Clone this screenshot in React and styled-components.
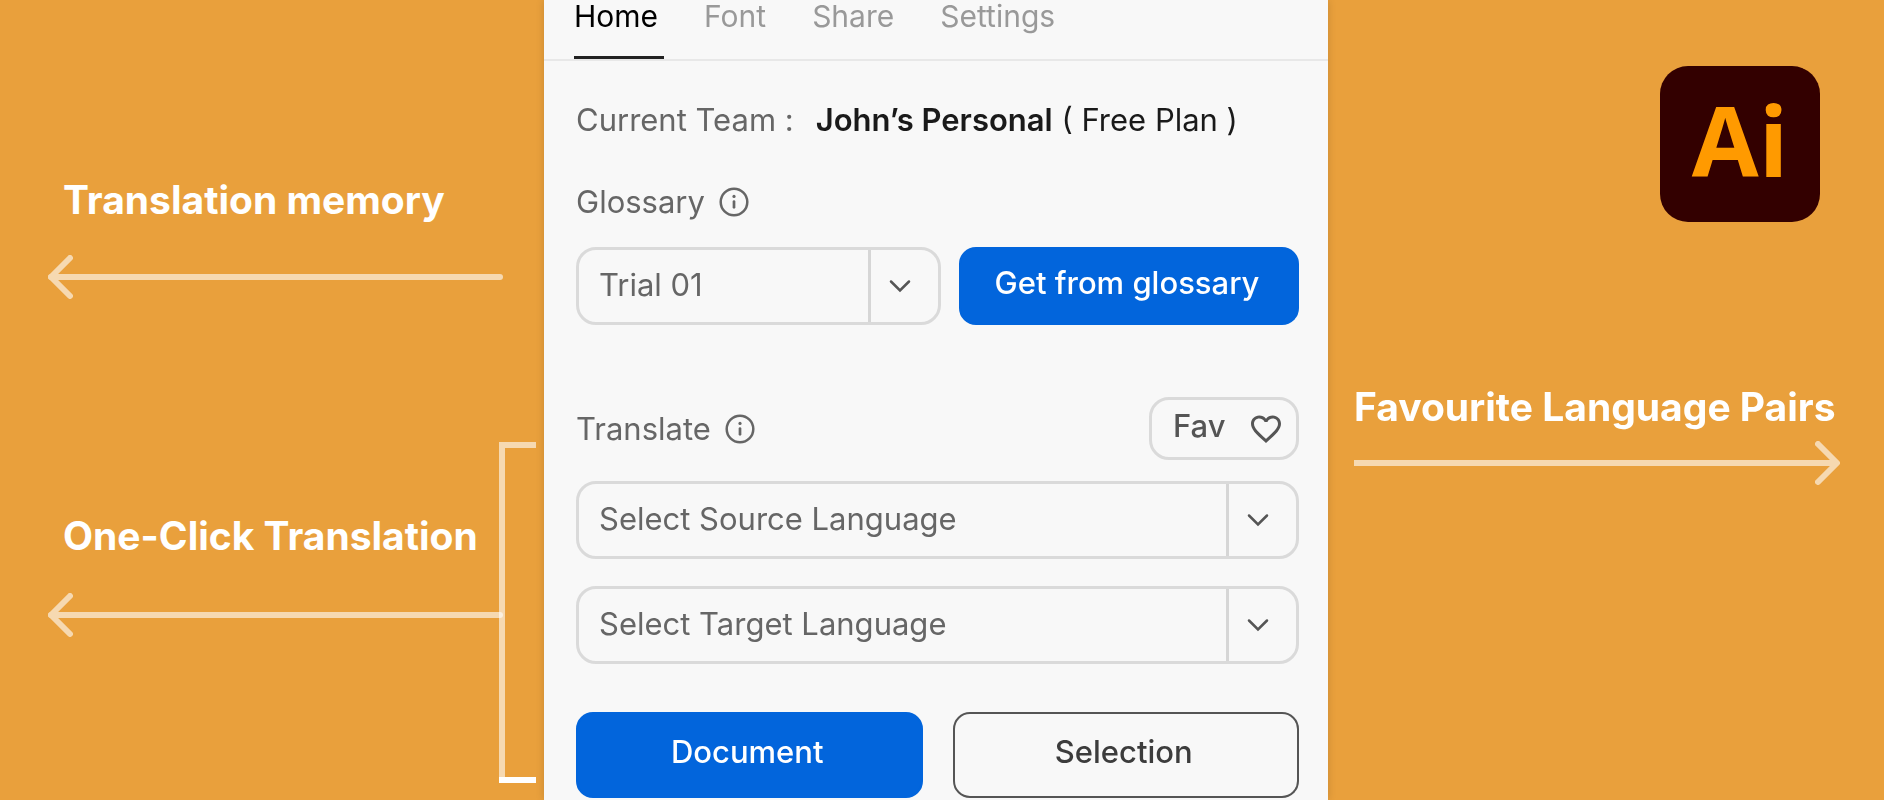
import React, { useState } from 'react';
import styled, { createGlobalStyle } from 'styled-components';
import { MdFavoriteBorder } from 'react-icons/md';

const tabList = ['Home', 'Font', 'Share', 'Settings'];

const InfoIcon = () => (
  <svg width="30" height="30" viewBox="0 0 30 30" fill="none" aria-hidden="true">
    <circle cx="15" cy="15" r="13.3" stroke="currentColor" strokeWidth="2.5" />
    <circle cx="15" cy="9.4" r="1.6" fill="currentColor" />
    <path
      d="M15 14.5v5.8"
      stroke="currentColor"
      strokeWidth="2.7"
      strokeLinecap="round"
    />
  </svg>
);

const Arrow = ({ direction }) => (
  <ArrowSvg aria-hidden="true">
    {direction === 'left' ? (
      <g opacity="0.6">
        <path d="M22 3L3 22L22 41" />
        <svg x="-3" overflow="visible">
          <line x1="6" y1="22" x2="100%" y2="22" />
        </svg>
      </g>
    ) : (
      <g opacity="0.6">
        <line x1="0" y1="22" x2="99%" y2="22" strokeLinecap="butt" />
        <svg x="100%" overflow="visible">
          <path d="M-22 3L-3 22L-22 41" />
        </svg>
      </g>
    )}
  </ArrowSvg>
);

const Dropdown = ({ label, options }) => (
  <SelectBox>
    <select aria-label={label}>
      {options.map(el => (
        <option key={el}>{el}</option>
      ))}
    </select>
    <SelectArrow>
      <svg width="22" height="14" viewBox="0 0 22 14" fill="none">
        <path
          d="M2 2.5L11 11.5L20 2.5"
          stroke="currentColor"
          strokeWidth="2.5"
          strokeLinecap="round"
        />
      </svg>
    </SelectArrow>
  </SelectBox>
);

const App = () => {
  const [current, setCurrent] = useState('Home');

  return (
    <>
      <GlobalStyle />
      <Page>
        <LeftSide>
          <Callout $gap={30}>
            <h2>Translation memory</h2>
            <Arrow direction="left" />
          </Callout>
          <BracketRow>
            <Callout $gap={32}>
              <h2>One-Click Translation</h2>
              <Arrow direction="left" />
            </Callout>
            <Bracket viewBox="0 0 37 341" fill="none" aria-hidden="true">
              <path d="M37 3H3V335" stroke="#fff" strokeWidth="6" opacity="0.6" />
              <path d="M0 338H37" stroke="#fff" strokeWidth="6" />
            </Bracket>
          </BracketRow>
        </LeftSide>

        <Panel>
          <Tabs>
            {tabList.map(tab => (
              <Tab
                key={tab}
                href={`#${tab}`}
                $active={current === tab}
                onClick={() => setCurrent(tab)}
              >
                {tab}
              </Tab>
            ))}
          </Tabs>
          <Content>
            <Team>
              <span>Current Team :</span>
              <p>
                <strong>John’s Personal</strong> ( Free Plan )
              </p>
            </Team>

            <Heading>
              Glossary <InfoIcon />
            </Heading>
            <GlossaryRow>
              <Dropdown label="Glossary" options={['Trial 01']} />
              <Button $primary>Get from glossary</Button>
            </GlossaryRow>

            <TranslateRow>
              <Heading>
                Translate <InfoIcon />
              </Heading>
              <FavButton>
                <span>Fav</span>
                <MdFavoriteBorder size={36} />
              </FavButton>
            </TranslateRow>
            <Languages>
              <Dropdown
                label="Source language"
                options={['Select Source Language']}
              />
              <Dropdown
                label="Target language"
                options={['Select Target Language']}
              />
            </Languages>

            <Actions>
              <Button $primary>Document</Button>
              <Button>Selection</Button>
            </Actions>
          </Content>
        </Panel>

        <RightSide>
          <Logo>Ai</Logo>
          <Callout $gap={9}>
            <h2>Favourite Language Pairs</h2>
            <Arrow direction="right" />
          </Callout>
        </RightSide>
      </Page>
    </>
  );
};

export default App;

const GlobalStyle = createGlobalStyle`
  * {
    box-sizing: border-box;
    margin: 0;
  }

  body {
    background-color: #e9a03c;
    font-family: Inter, 'Liberation Sans', sans-serif;
  }

  button, select {
    font: inherit;
    cursor: pointer;
  }
`;

const Page = styled.div`
  display: grid;
  grid-template-columns: minmax(0, 136fr) minmax(0, 196fr) minmax(0, 139fr);
  min-height: 100vh;
`;

const LeftSide = styled.aside`
  display: flex;
  flex-direction: column;
  gap: 143px;
  padding: 175px 8px 0 48px;

  > :first-child {
    margin-right: 33px;
  }
`;

const RightSide = styled.aside`
  display: flex;
  flex-direction: column;
  gap: 160px;
  padding: 66px 44px 0 26px;
`;

const Callout = styled.section`
  display: flex;
  flex-direction: column;
  gap: ${({ $gap }) => $gap}px;
  min-width: 0;

  h2 {
    color: white;
    font-size: 39px;
    font-weight: 700;
    line-height: 50px;
    white-space: nowrap;
  }

  ${LeftSide} & h2 {
    padding-left: 15px;
  }
`;

const BracketRow = styled.div`
  display: flex;

  ${Callout} {
    flex: 1;
    padding-top: 69px;
  }
`;

// 화살표 끝이 괄호 선 위에 겹치도록 살짝 당겨줌
const Bracket = styled.svg`
  flex-shrink: 0;
  width: 37px;
  height: 341px;
  margin-left: -4px;
`;

const ArrowSvg = styled.svg`
  display: block;
  width: 100%;
  height: 44px;
  fill: none;
  stroke: white;
  stroke-width: 6px;
  stroke-linecap: round;
  stroke-linejoin: round;
`;

const Logo = styled.div`
  display: flex;
  align-items: center;
  justify-content: center;
  align-self: flex-end;
  width: 160px;
  height: 156px;
  margin-right: 20px;
  padding-bottom: 10px;
  border-radius: 28px;
  background-color: #330000;
  color: #ff9a00;
  font-family: 'Open Sans', sans-serif;
  font-size: 97px;
  font-weight: 700;
`;

const Panel = styled.main`
  background-color: #f8f8f8;
  color: #666;
  font-size: 31px;
  line-height: 40px;
  box-shadow: 0 0 8px rgba(0, 0, 0, 0.15);
`;

const Tabs = styled.nav`
  display: flex;
  gap: 40px;
  height: 61px;
  padding: 0 30px;
  border-bottom: 2px solid #e8e8e8;
`;

const Tab = styled.a`
  padding-right: 6px;
  border-bottom: 3px solid ${({ $active }) => ($active ? '#222' : 'transparent')};
  color: ${({ $active }) => ($active ? '#000' : '#999')};
  font-size: 30px;
  line-height: 32px;
  text-decoration: none;
`;

const Content = styled.div`
  padding: 39px 29px 0 32px;
`;

const Team = styled.div`
  display: flex;
  gap: 22px;
  margin-bottom: 42px;
  white-space: nowrap;

  p {
    color: #1a1a1a;
  }

  strong {
    font-weight: 600;
  }
`;

const Heading = styled.h3`
  display: flex;
  align-items: center;
  gap: 14px;
  font-size: 31px;
  font-weight: 400;
`;

const SelectBox = styled.div`
  display: grid;
  grid-template-columns: 1fr 70px;
  height: 78px;
  border: 3px solid #dadada;
  border-radius: 20px;

  select {
    grid-row: 1;
    grid-column: 1 / 3;
    appearance: none;
    min-width: 0;
    padding: 0 20px 2px;
    border: none;
    border-radius: 17px;
    background-color: transparent;
    color: #666;
  }
`;

const SelectArrow = styled.span`
  display: flex;
  align-items: center;
  grid-row: 1;
  grid-column: 2;
  padding-left: 18px;
  border-left: 3px solid #d6d6d6;
  color: #555;
  pointer-events: none;
`;

const GlossaryRow = styled.div`
  display: grid;
  grid-template-columns: 365fr 340fr;
  gap: 18px;
  margin-top: 25px;
`;

const Button = styled.button`
  padding: 0 4px 6px 0;
  border: 2px solid ${({ $primary }) => ($primary ? '#0265dc' : '#555')};
  border-radius: 17px;
  background-color: ${({ $primary }) => ($primary ? '#0265dc' : 'transparent')};
  color: ${({ $primary }) => ($primary ? 'white' : '#3c3c3c')};
  font-weight: 500;
  white-space: nowrap;
`;

const TranslateRow = styled.div`
  display: flex;
  align-items: center;
  justify-content: space-between;
  margin: 72px 0 21px;
`;

const FavButton = styled.button`
  display: flex;
  align-items: center;
  justify-content: space-between;
  width: 150px;
  height: 63px;
  padding: 0 12px 0 21px;
  border: 3px solid #dadada;
  border-radius: 20px;
  background-color: transparent;
  color: #555;
  font-weight: 500;

  span {
    padding-bottom: 6px;
  }
`;

const Languages = styled.div`
  display: flex;
  flex-direction: column;
  gap: 27px;
`;

const Actions = styled.div`
  display: grid;
  grid-template-columns: 1fr 1fr;
  gap: 30px;
  height: 86px;
  margin-top: 48px;
`;
